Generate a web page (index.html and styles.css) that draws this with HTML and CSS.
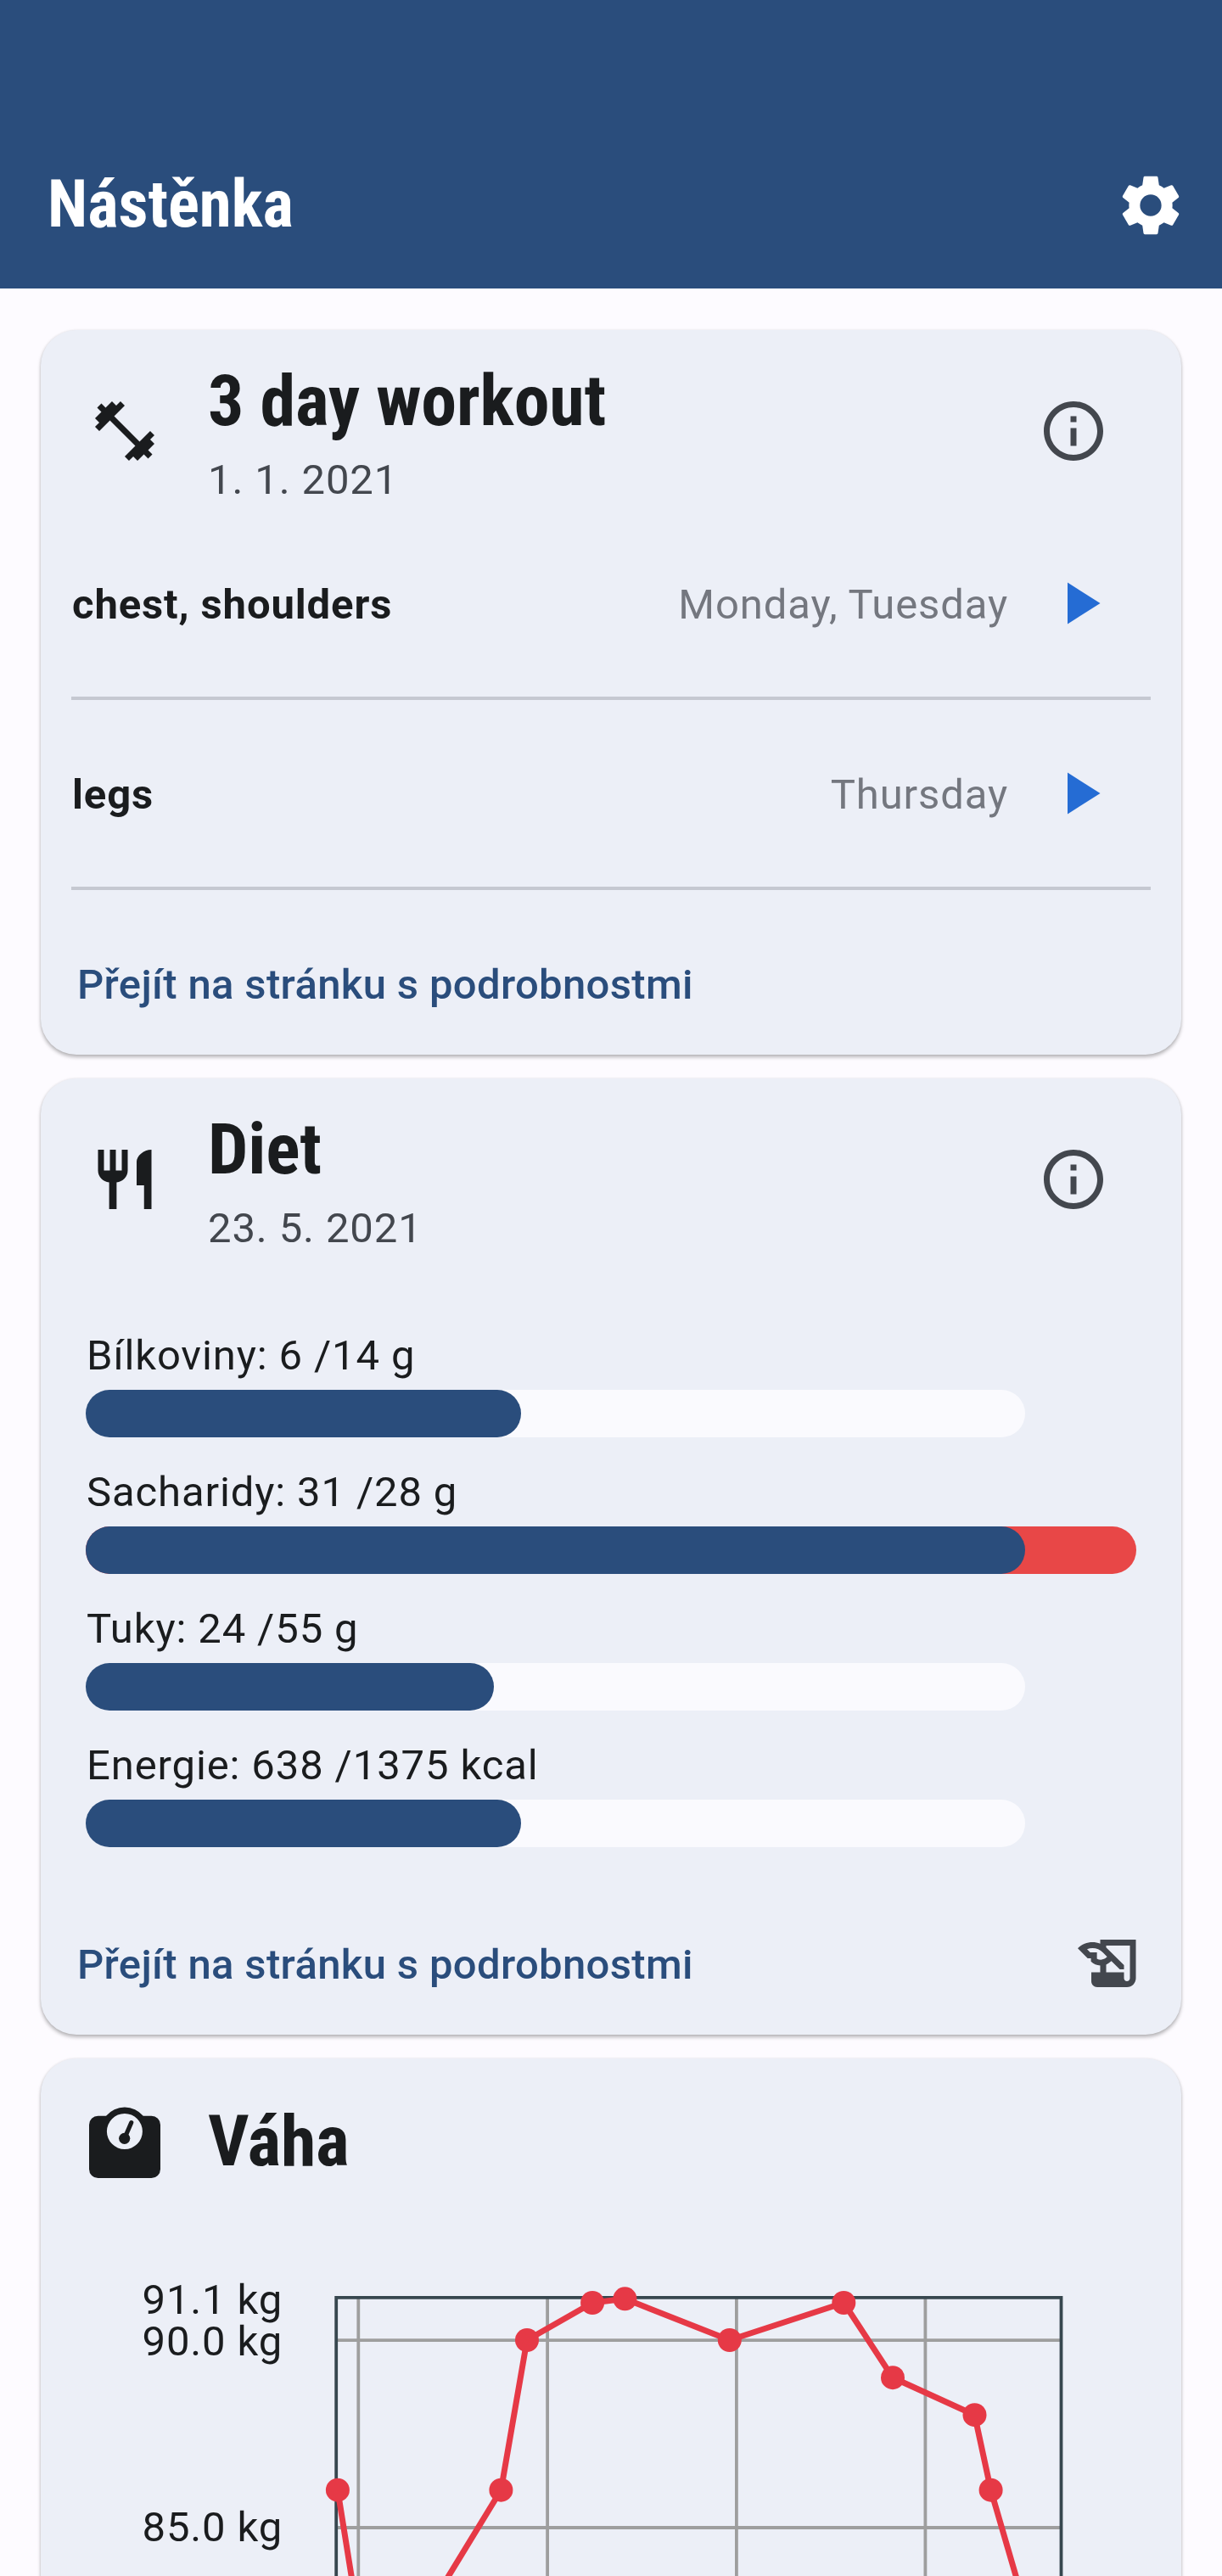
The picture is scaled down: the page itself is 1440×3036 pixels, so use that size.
FILE: index.html
```html
<!DOCTYPE html>
<html lang="cs">
<head>
<meta charset="utf-8">
<title>Nástěnka</title>
<link rel="stylesheet" href="styles.css">
</head>
<body>
<header class="appbar">
  <h1 class="appbar-title">Nástěnka</h1>
  <svg class="appbar-icon" viewBox="0 0 24 24"><path fill-rule="evenodd" d="M19.43 12.98c.04-.32.07-.64.07-.98s-.03-.66-.07-.98l2.11-1.65c.19-.15.24-.42.12-.64l-2-3.46c-.12-.22-.39-.3-.61-.22l-2.49 1c-.52-.4-1.08-.73-1.69-.98l-.38-2.65C14.46 2.18 14.25 2 14 2h-4c-.25 0-.46.18-.49.42l-.38 2.65c-.61.25-1.17.59-1.69.98l-2.49-1c-.23-.09-.49 0-.61.22l-2 3.46c-.13.22-.07.49.12.64l2.11 1.65c-.04.32-.07.65-.07.98s.03.66.07.98l-2.11 1.65c-.19.15-.24.42-.12.64l2 3.46c.12.22.39.3.61.22l2.49-1c.52.4 1.08.73 1.69.98l.38 2.65c.03.24.24.42.49.42h4c.25 0 .46-.18.49-.42l.38-2.65c.61-.25 1.17-.59 1.69-.98l2.49 1c.23.09.49 0 .61-.22l2-3.46c.12-.22.07-.49-.12-.64l-2.11-1.65zM12 15.7a3.7 3.7 0 1 1 0-7.4 3.7 3.7 0 0 1 0 7.4z"/></svg>
</header>

<main class="cards">
  <section class="card">
    <div class="card-head">
      <svg class="icon" viewBox="0 0 24 24"><path d="M20.57 14.86L22 13.43 20.57 12 17 15.57 8.43 7 12 3.43 10.57 2 9.14 3.43 7.71 2 5.57 4.14 4.14 2.71 2.71 4.14l1.43 1.43L2 7.71l1.43 1.43L2 10.57 3.43 12 7 8.43 15.57 17 12 20.57 13.43 22l1.43-1.43L16.29 22l2.14-2.14 1.43 1.43 1.43-1.43-1.43-1.43L22 16.29z"/></svg>
      <div class="heading">
        <h2 class="card-title">3 day workout</h2>
        <p class="card-date">1. 1. 2021</p>
      </div>
      <svg class="icon muted" viewBox="0 0 24 24"><path d="M11 7h2v2h-2zm0 4h2v6h-2zm1-9C6.48 2 2 6.48 2 12s4.48 10 10 10 10-4.48 10-10S17.52 2 12 2zm0 18c-4.41 0-8-3.59-8-8s3.59-8 8-8 8 3.59 8 8-3.59 8-8 8z"/></svg>
    </div>
    <ul class="days">
      <li class="day">
        <span class="day-name">chest, shoulders</span>
        <span class="day-when">Monday, Tuesday</span>
        <svg class="icon play" viewBox="0 0 24 24"><path d="M8 5v14l11-7z"/></svg>
      </li>
      <li class="day">
        <span class="day-name">legs</span>
        <span class="day-when">Thursday</span>
        <svg class="icon play" viewBox="0 0 24 24"><path d="M8 5v14l11-7z"/></svg>
      </li>
    </ul>
    <div class="card-foot">
      <a class="link">Přejít na stránku s podrobnostmi</a>
    </div>
  </section>

  <section class="card">
    <div class="card-head">
      <svg class="icon" viewBox="0 0 24 24"><path d="M11 9H9V2H7v7H5V2H3v7c0 2.12 1.66 3.84 3.75 3.97V22h2.5v-9.03C11.34 12.84 13 11.12 13 9V2h-2v7zm5-3v8h2.5v8H21V2c-2.76 0-5 2.24-5 4z"/></svg>
      <div class="heading">
        <h2 class="card-title">Diet</h2>
        <p class="card-date">23. 5. 2021</p>
      </div>
      <svg class="icon muted" viewBox="0 0 24 24"><path d="M11 7h2v2h-2zm0 4h2v6h-2zm1-9C6.48 2 2 6.48 2 12s4.48 10 10 10 10-4.48 10-10S17.52 2 12 2zm0 18c-4.41 0-8-3.59-8-8s3.59-8 8-8 8 3.59 8 8-3.59 8-8 8z"/></svg>
    </div>
    <div class="nutrients">
      <div class="nutrient">
        <p class="nutrient-label">Bílkoviny: 6 /14 g</p>
        <div class="track"><div class="fill" style="width:46.4%"></div></div>
      </div>
      <div class="nutrient">
        <p class="nutrient-label">Sacharidy: 31 /28 g</p>
        <div class="track over"><div class="fill" style="width:89.45%"></div></div>
      </div>
      <div class="nutrient">
        <p class="nutrient-label">Tuky: 24 /55 g</p>
        <div class="track"><div class="fill" style="width:43.5%"></div></div>
      </div>
      <div class="nutrient">
        <p class="nutrient-label">Energie: 638 /1375 kcal</p>
        <div class="track"><div class="fill" style="width:46.4%"></div></div>
      </div>
    </div>
    <div class="card-foot foot-diet">
      <a class="link">Přejít na stránku s podrobnostmi</a>
      <svg class="icon muted" viewBox="0 0 24 24"><path fill-rule="evenodd" d="M9 4v1.38c-.83-.33-1.72-.5-2.61-.5-1.79 0-3.58.68-4.95 2.05l3.33 3.33h1.11v1.11c.86.86 1.98 1.31 3.11 1.36V15H6v3c0 1.1.9 2 2 2h10c1.66 0 3-1.34 3-3V4H9zM7.89 10.41V8.26H5.61L4.57 7.22C5.14 7 5.76 6.88 6.39 6.88c1.34 0 2.59.52 3.54 1.46l1.41 1.41-.2.2c-.51.51-1.19.8-1.92.8-.47 0-.93-.12-1.33-.34zM19 17c0 .55-.45 1-1 1s-1-.45-1-1v-2h-6v-2.59c.57-.23 1.1-.57 1.56-1.03l.2-.2L15.59 14H17v-1.41l-6-5.97V6h8v11z"/></svg>
    </div>
  </section>

  <section class="card">
    <div class="card-head head-weight">
      <svg class="icon" viewBox="0 0 84 84"><path fill-rule="evenodd" d="M10.5 10.7H20A28.6 28.6 0 0 1 63.8 10.7H73.5A10.5 10.5 0 0 1 84 21.2V73.5A10.5 10.5 0 0 1 73.5 84H10.5A10.5 10.5 0 0 1 0 73.5V21.2A10.5 10.5 0 0 1 10.5 10.7zM41.9 8a21 21 0 1 0 0 42 21 21 0 0 0 0-42z"/><circle cx="41.7" cy="37.3" r="6.6"/><path class="needle" d="M41.7 37.3L49.7 18.7"/></svg>
      <h2 class="card-title">Váha</h2>
    </div>
    <svg class="chart" viewBox="48 2624 1344 500">
      <g class="labels">
        <text x="167.5" y="2726.6">91.1 kg</text>
        <text x="167.5" y="2775.6">90.0 kg</text>
        <text x="167.5" y="2995.4">85.0 kg</text>
      </g>
      <path class="grid" d="M422.3 2708V3200M645.1 2708V3200M867.9 2708V3200M1090.4 2708V3200M396 2758.2H1250.5M396 2979H1250.5"/>
      <path class="frame" d="M396.2 3200V2707.8H1250.5V3200"/>
      <path class="line" d="M397.9 2934.7L416.5 3051M519.5 3051L590.4 2934.7 621 2758 698.1 2714 736.4 2709.3 859.8 2758 994.3 2714 1052 2802.2 1148.5 2846.2 1167.6 2934.7 1201.5 3051"/>
      <g class="dots">
        <circle cx="397.9" cy="2934.7" r="14"/><circle cx="590.4" cy="2934.7" r="14"/><circle cx="621" cy="2758" r="14"/><circle cx="698.1" cy="2714" r="14"/><circle cx="736.4" cy="2709.3" r="14"/><circle cx="859.8" cy="2758" r="14"/><circle cx="994.3" cy="2714" r="14"/><circle cx="1052" cy="2802.2" r="14"/><circle cx="1148.5" cy="2846.2" r="14"/><circle cx="1167.6" cy="2934.7" r="14"/>
      </g>
    </svg>
  </section>
</main>
</body>
</html>
```
FILE: styles.css
```css
* { box-sizing: border-box; margin: 0; padding: 0; }

body {
  width: 1440px;
  height: 3036px;
  overflow: hidden;
  background: #fdfbff;
  color: #1a1c1e;
  font-family: Roboto, sans-serif;
  font-size: 49px;
  line-height: 70px;
  letter-spacing: 0.875px;
}

.appbar {
  display: flex;
  align-items: center;
  justify-content: space-between;
  height: 340px;
  padding: 143px 43px 0 56px;
  background: #2a4d7c;
  color: #fff;
}

.appbar-title {
  padding-bottom: 1px;
  font: 700 77px/98px "Roboto Condensed", Roboto, sans-serif;
  letter-spacing: 0;
}

.appbar-icon { width: 82px; height: 82px; fill: #fff; }

.cards {
  display: flex;
  flex-direction: column;
  gap: 28px;
  padding: 49px 48px 0;
}

.card {
  border-radius: 42px;
  background: #eceff7;
  box-shadow: 0 3px 4px -0.5px rgba(0, 0, 0, 0.27), 0 0 3px rgba(0, 0, 0, 0.08);
}

.card-head {
  display: flex;
  align-items: center;
  gap: 56px;
  height: 212px;
  padding: 26px 85px 0 57px;
}

.heading {
  display: flex;
  flex: 1;
  flex-direction: column;
  gap: 2px;
  padding-top: 2px;
}

.card-title {
  font: 700 84px/112px "Roboto Condensed", Roboto, sans-serif;
  letter-spacing: -0.15px;
}

.card-date { color: #43474e; }

.icon { flex: none; width: 84px; height: 84px; fill: #1a1c1e; }
.icon.muted { fill: #43474e; }
.icon.play { fill: #256cd4; }

.days { padding: 0 36px; list-style: none; }

.day {
  display: flex;
  align-items: center;
  height: 224px;
  padding-right: 42px;
  border-bottom: 4px solid #c5c8d1;
}

.day-name { flex: 1; padding: 3px 0 0 1px; font-weight: 700; }
.day-when { margin-right: 42px; padding-top: 3px; color: #74777f; }

.card-foot {
  display: flex;
  align-items: center;
  justify-content: space-between;
  height: 194px;
  padding: 28px 43px 0;
}

.link {
  padding-top: 2px;
  color: #2a4d7c;
  font-weight: 500;
  letter-spacing: 0.35px;
}

.foot-diet { height: 221px; padding-top: 53px; }
.foot-diet .link { padding-top: 3px; }

.nutrients {
  display: flex;
  flex-direction: column;
  gap: 29px;
  padding: 79px 53.5px 0 53px;
}

.nutrient { display: flex; flex-direction: column; gap: 5px; }

.nutrient-label { padding: 1px 0 0 1px; }

.track {
  width: 1106.5px;
  height: 56px;
  border-radius: 28px;
  background: #fafafe;
}

.track.over { width: 100%; background: #e84747; }

.fill { width: 0; height: 100%; border-radius: 28px; background: #2a4d7c; }

.head-weight { height: 198px; padding-top: 0; }
.head-weight .card-title { padding-bottom: 2px; }

.needle { fill: none; stroke: #1a1c1e; stroke-width: 5.2; stroke-linecap: round; }

.chart { display: block; width: 1344px; height: 500px; }
.labels { fill: #1a1c1e; font-size: 49px; }
.grid { fill: none; stroke: #9e9e9e; stroke-width: 3.8; }
.frame { fill: none; stroke: #37474f; stroke-width: 3.8; }
.line { fill: none; stroke: #e63946; stroke-width: 7; stroke-linejoin: round; }
.dots { fill: #e63946; }
```
